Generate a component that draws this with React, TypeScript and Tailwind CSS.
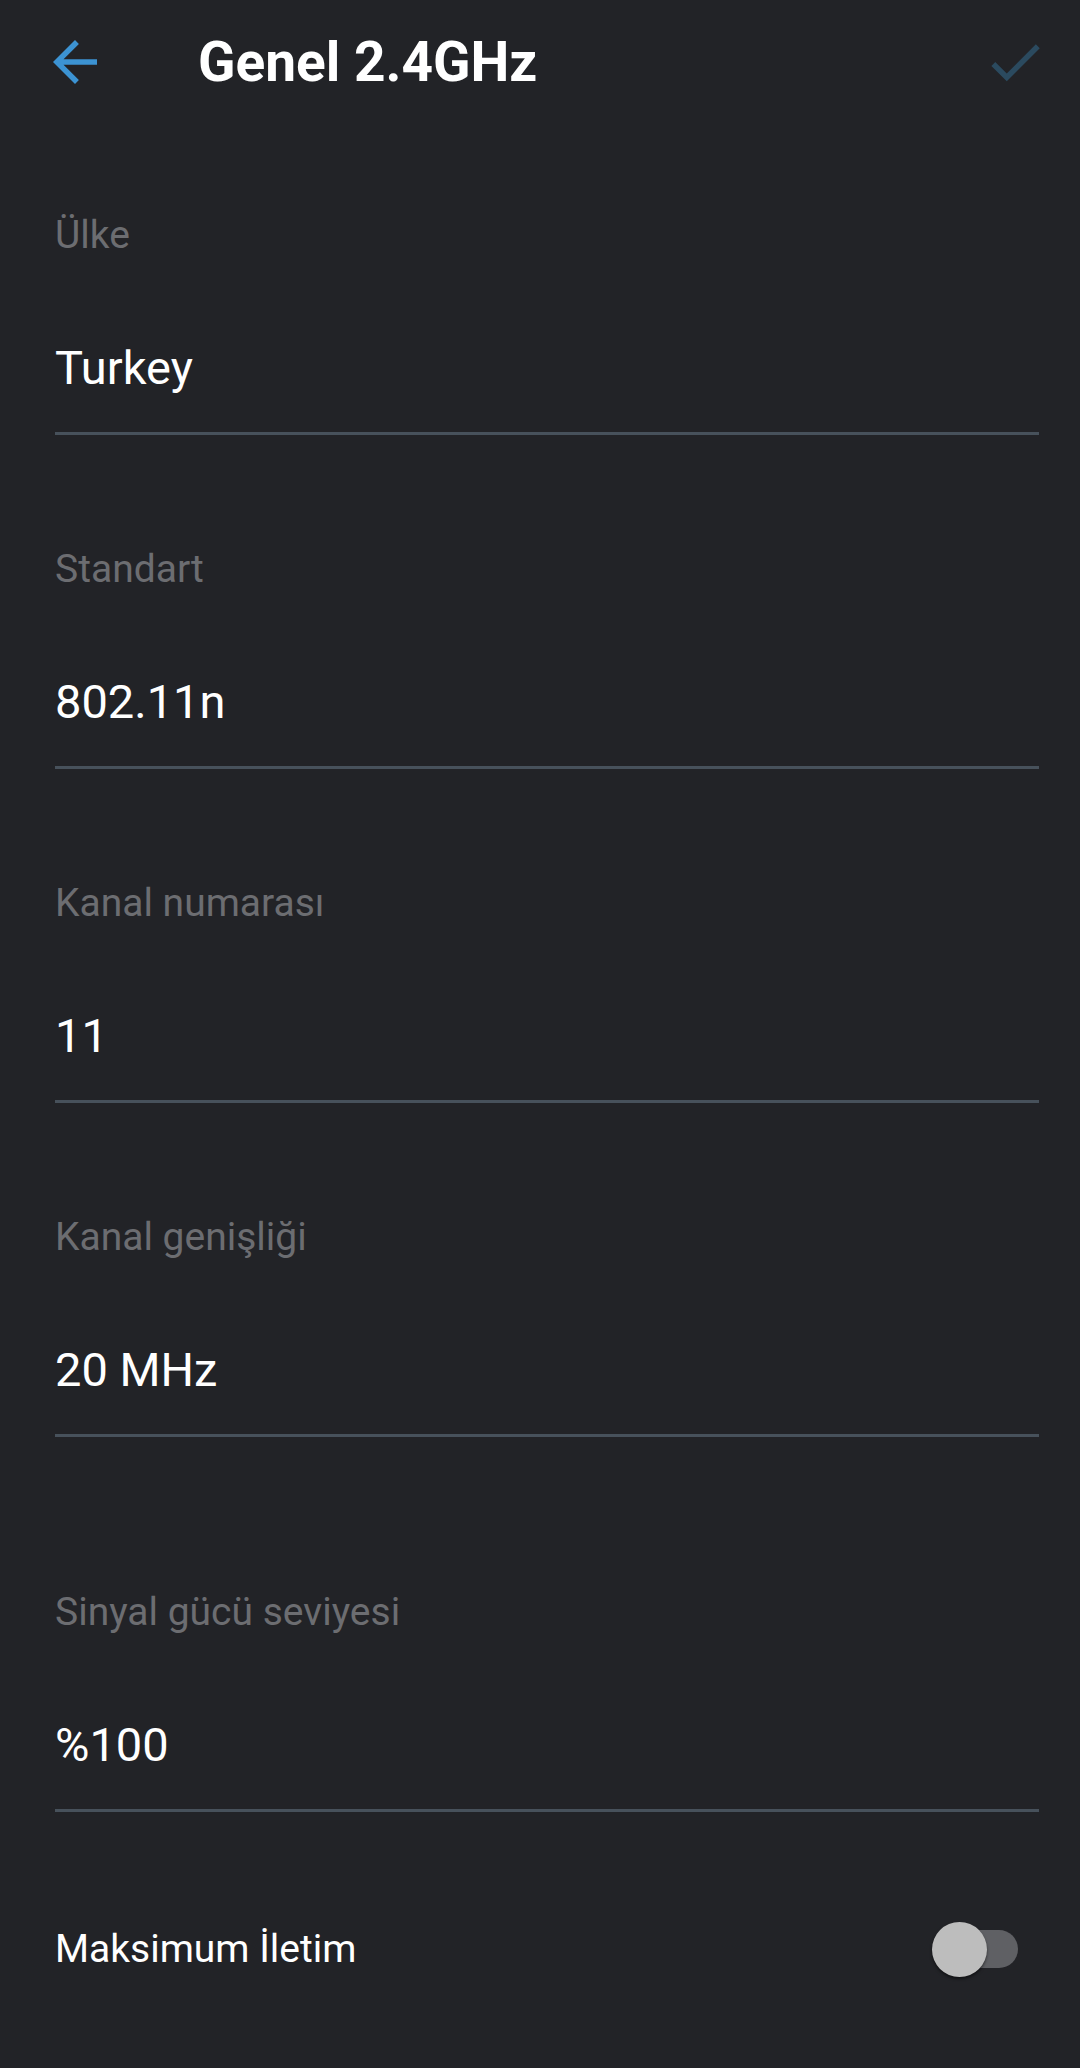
import React from 'react';

const FIELDS = [
  { label: 'Ülke', value: 'Turkey' },
  { label: 'Standart', value: '802.11n' },
  { label: 'Kanal numarası', value: '11' },
  { label: 'Kanal genişliği', value: '20 MHz' },
];

const Field = ({ label, value, first }: { label: string; value: string; first?: string }) => (
  <div className={first ?? 'mt-[110px]'}>
    <div className="h-[48px] flex items-center text-[39px] text-[#6c6d71] leading-none">{label}</div>
    <div className="mt-[80px] h-[56px] flex items-center text-[47px] text-white leading-none">{value}</div>
    <div className="mt-[37px] h-[3px] bg-[#47515b]" />
  </div>
);

export default function App() {
  return (
    <div
      className="w-[1080px] h-[2068px] bg-[#222327] overflow-hidden"
      style={{ fontFamily: 'Roboto, "Noto Sans", sans-serif' }}
    >
      <div className="h-[124px] flex items-center">
        <svg viewBox="0 0 24 24" className="w-[66px] h-[66px] ml-[42px] fill-[#3c93d3]">
          <path d="M20 11H7.83l5.59-5.59L12 4l-8 8 8 8 1.41-1.41L7.83 13H20v-2z" />
        </svg>
        <h1 className="ml-[90px] text-[55px] font-bold text-white leading-none">Genel 2.4GHz</h1>
        <svg viewBox="0 0 24 24" className="w-[66px] h-[66px] ml-auto mr-[32px] fill-[#2b4a5f]">
          <path d="M9 16.17L4.83 12l-1.42 1.41L9 19 21 7l-1.41-1.41z" />
        </svg>
      </div>

      <div className="pl-[55px] pr-[41px]">
        {FIELDS.map((f, i) => (
          <Field key={f.label} label={f.label} value={f.value} first={i === 0 ? 'mt-[87px]' : undefined} />
        ))}
        <Field label="Sinyal gücü seviyesi" value="%100" first="mt-[151px]" />

        <div className="mt-[107px] h-[60px] flex items-center justify-between">
          <span className="text-[39px] text-white leading-none">Maksimum İletim</span>
          <div className="relative w-[70px] h-[38px] mr-[21px]">
            <div className="absolute inset-0 rounded-full bg-[#5f6064]" />
            <div className="absolute left-[-16px] top-[-8px] w-[55px] h-[55px] rounded-full bg-[#bdbdbd] shadow-[0_2px_3px_rgba(0,0,0,0.5)]" />
          </div>
        </div>
      </div>
    </div>
  );
}
